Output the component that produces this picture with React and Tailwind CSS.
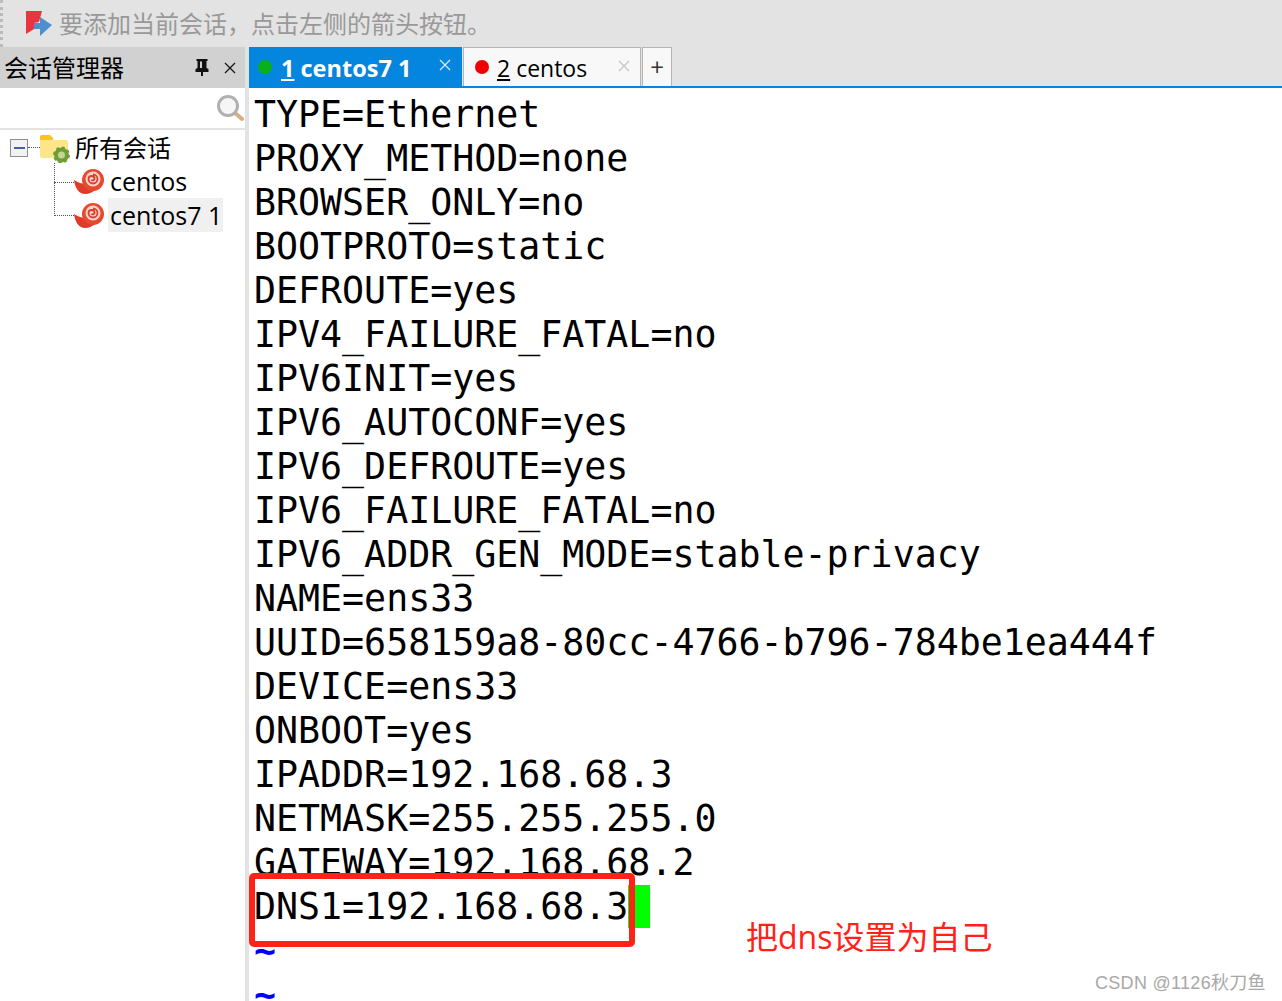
const LINES = [
  'TYPE=Ethernet',
  'PROXY_METHOD=none',
  'BROWSER_ONLY=no',
  'BOOTPROTO=static',
  'DEFROUTE=yes',
  'IPV4_FAILURE_FATAL=no',
  'IPV6INIT=yes',
  'IPV6_AUTOCONF=yes',
  'IPV6_DEFROUTE=yes',
  'IPV6_FAILURE_FATAL=no',
  'IPV6_ADDR_GEN_MODE=stable-privacy',
  'NAME=ens33',
  'UUID=658159a8-80cc-4766-b796-784be1ea444f',
  'DEVICE=ens33',
  'ONBOOT=yes',
  'IPADDR=192.168.68.3',
  'NETMASK=255.255.255.0',
  'GATEWAY=192.168.68.2',
];

const CJK = "font-['Open_Sans','Noto_Sans_CJK_SC',sans-serif]";

function ArrowLogo() {
  return (
    <svg width="28" height="28" viewBox="0 0 28 28" className="shrink-0">
      <path d="M1 1h16l-3 11-5 1v6l-8 5z" fill="#e8353f" />
      <path d="M9 13h6V7l12 8-12 11v-7H9z" fill="#4f8fd0" />
    </svg>
  );
}

function Snail() {
  return (
    <svg width="32" height="26" viewBox="0 0 32 26" className="shrink-0">
      <path d="M0 12c5 3 9 4 13 4 2 3 5 5 10 5-4 3-8 5-12 5-6 0-10-6-11-14z" fill="#e03a2a" />
      <circle cx="19" cy="12" r="11" fill="#e8482f" />
      <circle cx="19" cy="11" r="7.500" fill="#fbd5ca" />
      <path d="M19 6.500a4.500 4.500 0 1 1-4.500 4.500c0-2 1.500-3 3.200-3s2.800 1.200 2.800 2.800-2.200 2.200-3 1" fill="none" stroke="#e03a2a" strokeWidth="1.800" />
    </svg>
  );
}

function FolderGear() {
  return (
    <svg width="30" height="30" viewBox="0 0 30 30" className="shrink-0">
      <path d="M0 4a2 2 0 0 1 2-2h8l3 3v3H0z" fill="#fcc419" />
      <path d="M0 7h26a2 2 0 0 1 2 2v14a2 2 0 0 1-2 2H2a2 2 0 0 1-2-2z" fill="#fde68a" />
      <circle cx="21.500" cy="22" r="5.500" fill="#c3d68e" stroke="#6f9e36" strokeWidth="4" />
      <circle cx="21.500" cy="22" r="7.500" fill="none" stroke="#6f9e36" strokeWidth="2" strokeDasharray="3 2.900" />
    </svg>
  );
}

function Pin() {
  return (
    <svg width="14" height="17" viewBox="0 0 14 17">
      <path d="M1.500 0h11v2h-1v7l2 1v3H8v4H6v-4H.5v-3l2-1V2h-1z" fill="#111" />
      <path d="M5 2.500h2v6.500H5z" fill="#d1d1d1" />
    </svg>
  );
}

function Search() {
  return (
    <svg width="28" height="28" viewBox="0 0 28 28">
      <path d="M19 19l7 6" stroke="#d9ae80" strokeWidth="4" strokeLinecap="round" />
      <circle cx="12" cy="12" r="9.500" fill="#f6f6f6" stroke="#b0b0b0" strokeWidth="3" />
    </svg>
  );
}

function CloseX({ color }) {
  return (
    <svg width="12" height="12" viewBox="0 0 12 12" className="shrink-0">
      <path d="M1 1l10 10M11 1L1 11" stroke={color} strokeWidth="1.200" fill="none" />
    </svg>
  );
}

function Sidebar() {
  return (
    <aside className="w-[245px] shrink-0 flex flex-col">
      <div className="h-[41px] bg-[#d1d1d1] flex items-center pl-[4px] pr-[9px]">
        <span className="text-[24px] text-black flex-1 leading-none">会话管理器</span>
        <Pin />
        <span className="ml-[15px]"><CloseX color="#111" /></span>
      </div>
      <div className="h-[40px] bg-white ml-[2px] pr-[1px] flex items-center justify-end">
        <Search />
      </div>
      <div className="h-[2px] bg-[#e3e3e3]"></div>
      <div className="relative pl-[10px] pt-[1px]">
        <div className="flex items-center h-[33px]">
          <div className="w-[18px] h-[18px] border border-[#8f8f8f] bg-[#f2f2f2] flex items-center justify-center">
            <div className="w-[11px] h-[2px] bg-[#44629f]"></div>
          </div>
          <div className="w-[12px] border-t border-dotted border-[#555]"></div>
          <FolderGear />
          <span className="ml-[5px] text-[24px] leading-none text-black">所有会话</span>
        </div>
        <div className="flex items-center h-[34px] pl-[64px]">
          <Snail />
          <span className="ml-[4px] text-[25px] leading-none text-black">centos</span>
        </div>
        <div className="flex items-center h-[34px] pl-[64px]">
          <Snail />
          <span className="ml-[2px] px-[2px] w-[115px] h-[34px] bg-[#f0f0f0] text-[25px] leading-[34px] text-black whitespace-nowrap">centos7 1</span>
        </div>
        <div className="absolute left-[54px] top-[33px] w-[20px] h-[53px] border-l border-b border-dotted border-[#555]"></div>
        <div className="absolute left-[54px] top-[52px] w-[20px] border-t border-dotted border-[#555]"></div>
      </div>
    </aside>
  );
}

function Tabs() {
  return (
    <div className="h-[41px] bg-[#e3e3e3] flex items-stretch border-b-2 border-[#0486de]">
      <div className="w-[213px] bg-[#0486de] flex items-center pl-[9px] text-white">
        <span className="w-[14px] h-[14px] rounded-full bg-[#0aaf1c]"></span>
        <span className="ml-[9px] pt-[4px] text-[23.500px] font-bold leading-none whitespace-nowrap"><u>1</u> centos7 1</span>
        <span className="ml-[28px] -mt-[3px]"><CloseX color="#d8ecfa" /></span>
      </div>
      <div className="ml-[1px] w-[178px] bg-[#f8f8f8] border border-b-0 border-[#b5b5b5] flex items-center pl-[11px] text-black">
        <span className="w-[14px] h-[14px] rounded-full bg-[#f00000]"></span>
        <span className="ml-[8px] pt-[2px] text-[23px] leading-none whitespace-nowrap"><u>2</u> centos</span>
        <span className="ml-[31px] -mt-[3px]"><CloseX color="#c4c4c4" /></span>
      </div>
      <div className="ml-[1px] w-[30px] bg-[#f8f8f8] border border-b-0 border-[#b5b5b5] flex items-center justify-center text-[24px] leading-none text-[#333]">+</div>
    </div>
  );
}

function Terminal() {
  return (
    <div className="relative flex-1 pl-[5px] pt-[5px] bg-white overflow-hidden font-['DejaVu_Sans_Mono',monospace] text-[36.580px] leading-[44px] text-black whitespace-pre">
      {LINES.map((line) => (
        <div key={line} className="h-[44px]">{line}</div>
      ))}
      <div className="h-[44px] flex">
        <span>DNS1=192.168.68.3</span>
        <span className="w-[22px] h-[43px] bg-[#00ff00]"></span>
      </div>
      <div className="h-[44px] text-[#0000ff] font-bold">~</div>
      <div className="h-[44px] text-[#0000ff] font-bold">~</div>
      <div className="absolute left-0 top-[785px] w-[386px] h-[74px] border-[6px] border-[#ff2218] rounded-[5px]"></div>
    </div>
  );
}

export default function App() {
  return (
    <div className={`relative w-[1282px] h-[1001px] overflow-hidden bg-white ${CJK}`}>
      <div className="h-[47px] bg-[#e3e3e3] flex items-center pl-[22px] border-l-[3px] border-dotted border-l-[#bbb]">
        <ArrowLogo />
        <span className="ml-[6px] text-[24px] leading-none text-[#999]">要添加当前会话，点击左侧的箭头按钮。</span>
      </div>
      <div className="flex h-[954px]">
        <Sidebar />
        <div className="w-[4px] shrink-0 bg-[#e3e3e3]"></div>
        <div className="flex-1 flex flex-col min-w-0">
          <Tabs />
          <Terminal />
        </div>
      </div>
      <div className="absolute left-[746px] top-[915px] text-[32px] leading-[44px] text-[#ff2218]">把dns设置为自己</div>
      <div className="absolute left-[1095px] top-[971px] text-[18px] leading-[24px] tracking-[0.3px] text-[#a8a8a8] font-['Liberation_Sans','Noto_Sans_CJK_SC',sans-serif]">CSDN @1126秋刀鱼</div>
    </div>
  );
}
